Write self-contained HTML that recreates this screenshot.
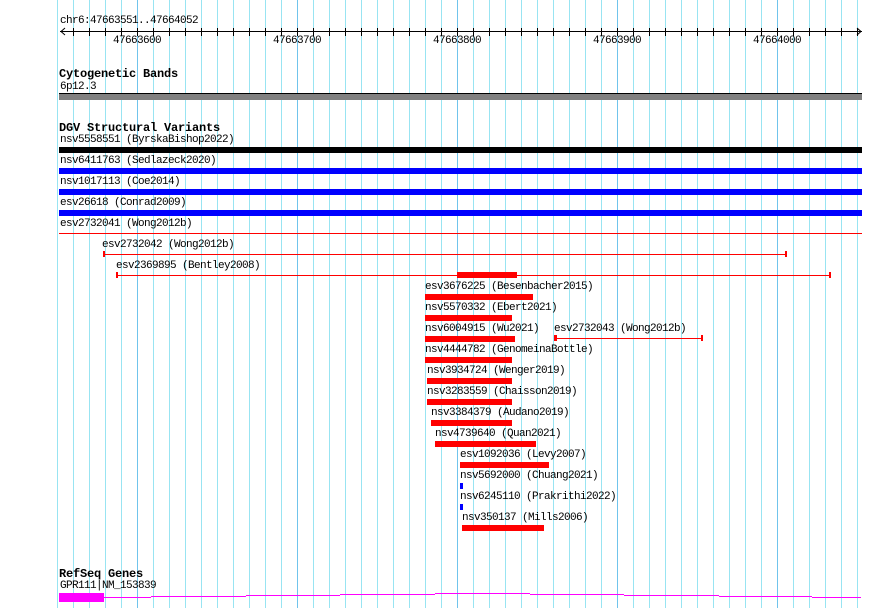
<!DOCTYPE html>
<html><head><style>
body{margin:0;width:890px;height:608px;background:#fff;position:relative;overflow:hidden;font-family:"Liberation Mono","DejaVu Sans Mono",monospace;font-size:11px;letter-spacing:-0.6px;color:#000}
.t{position:absolute;white-space:pre;line-height:11px;margin-top:1px}
.b{font-weight:bold;font-size:12px;letter-spacing:-0.2px;margin-top:2px}
.r{position:absolute}
</style></head><body>
<svg class="r" style="left:0;top:0" width="890" height="608">
<g id="gl"></g>
</svg>
<script>
(function(){var h='';for(var x=57;x<=860;x+=16){var d=((x-137)%160===0);h+='<rect x="'+x+'" y="0" width="1" height="608" fill="'+(d?'#70c4ec':'#98e4f2')+'"/>';}
var tk='';for(var x=73;x<=860;x+=16){tk+='<rect x="'+x+'" y="28" width="1" height="8" fill="#000"/>';}
document.getElementById('gl').innerHTML=h+tk;})();
</script>
<svg class="r" style="left:0;top:0" width="890" height="608">
<rect x="60" y="31" width="802" height="1" fill="#000"/>
<polyline points="65,28 61,31.5 65,35" fill="none" stroke="#000"/>
<polyline points="857,28 861,31.5 857,35" fill="none" stroke="#000"/>
<rect x="59" y="233" width="803" height="1" fill="#f00"/>
<rect x="104" y="254" width="682" height="1" fill="#f00"/>
<rect x="103" y="251" width="2" height="6" fill="#f00"/><rect x="785" y="251" width="2" height="6" fill="#f00"/>
<rect x="117" y="275" width="713" height="1" fill="#f00"/>
<rect x="116" y="272" width="2" height="6" fill="#f00"/><rect x="829" y="272" width="2" height="6" fill="#f00"/>
<rect x="457" y="272" width="60" height="6" fill="#f00"/>
<rect x="555" y="338" width="147" height="1" fill="#f00"/>
<rect x="554" y="335" width="3" height="6" fill="#f00"/><rect x="701" y="335" width="2" height="6" fill="#f00"/>
<rect x="59" y="593" width="45" height="9" fill="#f0f"/>
<g fill="#f0f">
<rect x="104" y="597" width="47" height="1"/>
<rect x="151" y="596" width="95" height="1"/>
<rect x="246" y="595" width="94" height="1"/>
<rect x="340" y="594" width="95" height="1"/>
<rect x="435" y="593" width="95" height="1"/>
<rect x="530" y="594" width="94" height="1"/>
<rect x="624" y="595" width="95" height="1"/>
<rect x="719" y="596" width="93" height="1"/>
<rect x="812" y="597" width="49" height="1"/>
</g>
</svg>
<div class="t" style="left:60px;top:15px">chr6:47663551..47664052</div>
<div class="t" style="left:113px;top:35px">47663600</div>
<div class="t" style="left:273px;top:35px">47663700</div>
<div class="t" style="left:433px;top:35px">47663800</div>
<div class="t" style="left:593px;top:35px">47663900</div>
<div class="t" style="left:753px;top:35px">47664000</div>
<div class="t b" style="left:59px;top:67px">Cytogenetic Bands</div>
<div class="t" style="left:60px;top:81px">6p12.3</div>
<div class="r" style="left:59px;top:93px;width:803px;height:1px;background:#000"></div>
<div class="r" style="left:59px;top:94px;width:803px;height:6px;background:#808080"></div>
<div class="t b" style="left:59px;top:121px">DGV Structural Variants</div>
<div class="t" style="left:60px;top:134px">nsv5558551 (ByrskaBishop2022)</div>
<div class="r" style="left:59px;top:147px;width:803px;height:6px;background:#000"></div>
<div class="t" style="left:60px;top:155px">nsv6411763 (Sedlazeck2020)</div>
<div class="r" style="left:59px;top:168px;width:803px;height:6px;background:#00f"></div>
<div class="t" style="left:60px;top:176px">nsv1017113 (Coe2014)</div>
<div class="r" style="left:59px;top:189px;width:803px;height:6px;background:#00f"></div>
<div class="t" style="left:60px;top:197px">esv26618 (Conrad2009)</div>
<div class="r" style="left:59px;top:210px;width:803px;height:6px;background:#00f"></div>
<div class="t" style="left:60px;top:218px">esv2732041 (Wong2012b)</div>
<div class="t" style="left:102px;top:239px">esv2732042 (Wong2012b)</div>
<div class="t" style="left:116px;top:260px">esv2369895 (Bentley2008)</div>
<div class="t" style="left:425px;top:281px">esv3676225 (Besenbacher2015)</div>
<div class="r" style="left:425px;top:294px;width:108px;height:6px;background:#f00"></div>
<div class="t" style="left:425px;top:302px">nsv5570332 (Ebert2021)</div>
<div class="r" style="left:425px;top:315px;width:87px;height:6px;background:#f00"></div>
<div class="t" style="left:425px;top:323px">nsv6004915 (Wu2021)</div>
<div class="t" style="left:554px;top:323px">esv2732043 (Wong2012b)</div>
<div class="r" style="left:425px;top:336px;width:90px;height:6px;background:#f00"></div>
<div class="t" style="left:425px;top:344px">nsv4444782 (GenomeinaBottle)</div>
<div class="r" style="left:425px;top:357px;width:87px;height:6px;background:#f00"></div>
<div class="t" style="left:427px;top:365px">nsv3934724 (Wenger2019)</div>
<div class="r" style="left:427px;top:378px;width:85px;height:6px;background:#f00"></div>
<div class="t" style="left:427px;top:386px">nsv3283559 (Chaisson2019)</div>
<div class="r" style="left:427px;top:399px;width:85px;height:6px;background:#f00"></div>
<div class="t" style="left:431px;top:407px">nsv3384379 (Audano2019)</div>
<div class="r" style="left:431px;top:420px;width:81px;height:6px;background:#f00"></div>
<div class="t" style="left:435px;top:428px">nsv4739640 (Quan2021)</div>
<div class="r" style="left:435px;top:441px;width:101px;height:6px;background:#f00"></div>
<div class="t" style="left:460px;top:449px">esv1092036 (Levy2007)</div>
<div class="r" style="left:460px;top:462px;width:89px;height:6px;background:#f00"></div>
<div class="t" style="left:460px;top:470px">nsv5692000 (Chuang2021)</div>
<div class="r" style="left:460px;top:483px;width:3px;height:6px;background:#00f"></div>
<div class="t" style="left:460px;top:491px">nsv6245110 (Prakrithi2022)</div>
<div class="r" style="left:460px;top:504px;width:3px;height:6px;background:#00f"></div>
<div class="t" style="left:462px;top:512px">nsv350137 (Mills2006)</div>
<div class="r" style="left:462px;top:525px;width:82px;height:6px;background:#f00"></div>
<div class="t b" style="left:59px;top:567px">RefSeq Genes</div>
<div class="t" style="left:60px;top:580px">GPR111|NM_153839</div>
</body></html>
